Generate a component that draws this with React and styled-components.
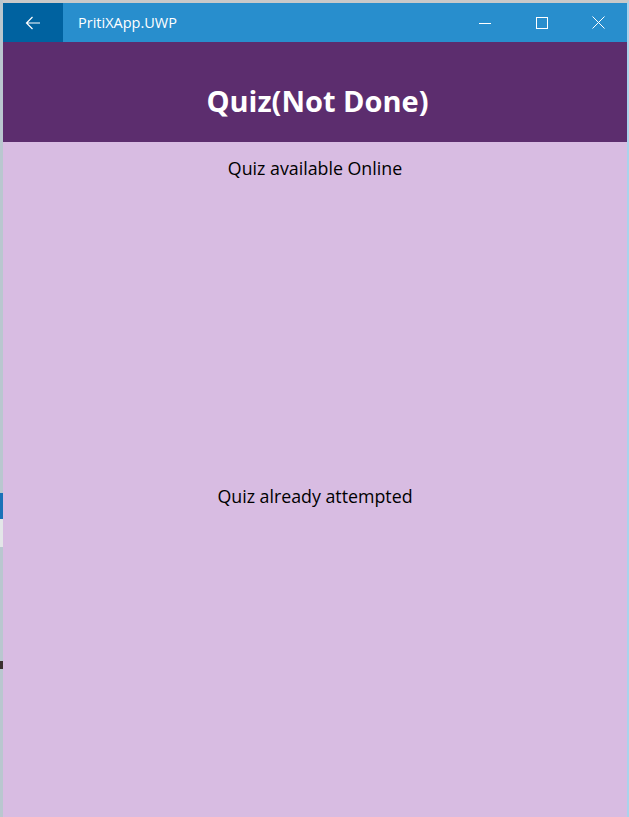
import React from 'react';
import styled, { createGlobalStyle } from 'styled-components';

const GlobalStyle = createGlobalStyle`
  html, body {
    margin: 0;
    padding: 0;
    width: 629px;
    height: 817px;
    overflow: hidden;
    background: #c4ccd2;
  }
  * { box-sizing: border-box; }
`;

// desktop strip peeking out on the left
const Desktop = styled.div`
  display: flex;
  width: 629px;
  height: 817px;
`;

const DesktopEdge = styled.div`
  width: 3px;
  display: flex;
  flex-direction: column;
  background: #b9c7cf;
  padding-top: 493px;
`;

const EdgeBit = styled.div`
  height: ${p => p.h}px;
  background: ${p => p.c};
`;

const Window = styled.div`
  flex: 1;
  display: flex;
  flex-direction: column;
  border-top: 3px solid #c9c9c9;
  border-right: 2px solid #a9d3ec;
  font-family: 'Open Sans', 'Noto Sans', sans-serif;
`;

const TitleBar = styled.div`
  height: 39px;
  display: flex;
  align-items: center;
  background: #288ecd;
  color: #fff;
`;

const BackButton = styled.div`
  width: 60px;
  height: 100%;
  display: flex;
  align-items: center;
  justify-content: center;
  background: #0062a0;
`;

const AppName = styled.div`
  flex: 1;
  padding-left: 15px;
  font-size: 14.5px;
  padding-bottom: 1px;
`;

const CtrlButton = styled.div`
  width: 57px;
  height: 100%;
  display: flex;
  align-items: center;
  justify-content: center;
`;

const Header = styled.div`
  height: 100px;
  display: flex;
  align-items: center;
  justify-content: center;
  background: #5c2d6e;
  color: #fff;
  font-size: 29px;
  font-weight: 700;
  padding-left: 5px;
  padding-top: 16px;
`;

const Content = styled.div`
  flex: 1;
  background: #d8bce2;
  display: flex;
  flex-direction: column;
  padding-top: 15px;
`;

const Section = styled.div`
  height: ${p => p.h}px;
  text-align: center;
  font-size: 17.8px;
  color: #000;
  line-height: 22px;
`;

export default function App() {
  return (
    <>
      <GlobalStyle />
      <Desktop>
        <DesktopEdge>
          <EdgeBit h={26} c="#1a72b8" />
          <EdgeBit h={28} c="#e3e6e8" />
          <EdgeBit h={114} c="#b9c7cf" />
          <EdgeBit h={8} c="#3a3030" />
        </DesktopEdge>
        <Window>
          <TitleBar>
            <BackButton>
              <svg width="16" height="14" viewBox="0 0 16 14">
                <path d="M15 7H1.5M7.5 1L1.5 7l6 6" stroke="#fff" strokeWidth="1.2" fill="none" />
              </svg>
            </BackButton>
            <AppName>PritiXApp.UWP</AppName>
            <CtrlButton>
              <svg width="12" height="12" viewBox="0 0 12 12">
                <path d="M0 6.5h12" stroke="#fff" strokeWidth="1" />
              </svg>
            </CtrlButton>
            <CtrlButton>
              <svg width="12" height="12" viewBox="0 0 12 12">
                <rect x="0.5" y="0.5" width="11" height="11" stroke="#fff" strokeWidth="1" fill="none" />
              </svg>
            </CtrlButton>
            <CtrlButton>
              <svg width="13" height="13" viewBox="0 0 13 13">
                <path d="M0.5 0.5l12 12M12.5 0.5l-12 12" stroke="#fff" strokeWidth="1" />
              </svg>
            </CtrlButton>
          </TitleBar>
          <Header>Quiz(Not Done)</Header>
          <Content>
            <Section h={328}>Quiz available Online</Section>
            <Section h={300}>Quiz already attempted</Section>
          </Content>
        </Window>
      </Desktop>
    </>
  );
}
